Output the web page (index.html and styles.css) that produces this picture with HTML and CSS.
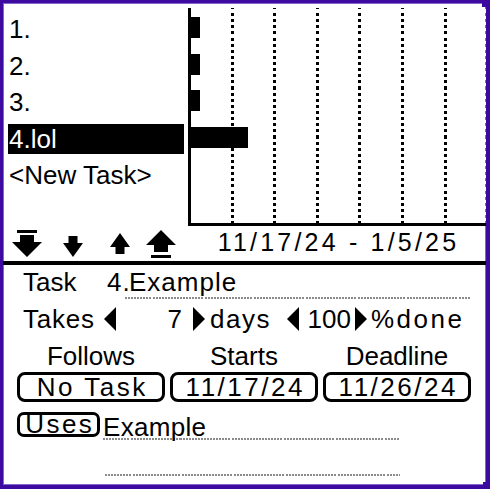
FILE: index.html
```html
<!DOCTYPE html>
<html>
<head>
<meta charset="utf-8">
<title>Project</title>
<link rel="stylesheet" href="styles.css">
</head>
<body>
<div class="screen">
  <div class="top">
    <div class="left">
      <ol class="tasks">
        <li>1.</li>
        <li>2.</li>
        <li>3.</li>
        <li class="sel">4.lol</li>
        <li>&lt;New Task&gt;</li>
      </ol>
      <div class="nav">
        <svg class="ic ic-first" width="30" height="28" viewBox="0 0 30 28"><rect x="5" y="0" width="20" height="3"/><polygon points="8,5 22,5 22,12 30,12 15,27 0,12 8,12"/></svg>
        <svg class="ic ic-down" width="20" height="28" viewBox="0 0 20 28"><polygon points="5.5,6 14.5,6 14.5,13 20,13 10,27 0,13 5.5,13"/></svg>
        <svg class="ic ic-up" width="20" height="28" viewBox="0 0 20 28"><polygon points="10,3 20,17 14.5,17 14.5,24 5.5,24 5.5,17 0,17"/></svg>
        <svg class="ic ic-last" width="30" height="28" viewBox="0 0 30 28"><polygon points="15,0 30,15 22,15 22,22 8,22 8,15 0,15"/><rect x="5" y="25" width="20" height="3"/></svg>
      </div>
    </div>
    <div class="right">
      <div class="chart">
        <div class="bar" style="width:9px"></div>
        <div class="bar" style="width:9px"></div>
        <div class="bar" style="width:9px"></div>
        <div class="bar" style="width:57px"></div>
      </div>
      <div class="range">11/17/24 - 1/5/25</div>
    </div>
  </div>
  <div class="divider"></div>
  <div class="bottom">
    <div class="row task-row">
      <span class="lbl task-lbl">Task</span>
      <span class="num">4.</span>
      <span class="field task-field">Example</span>
    </div>
    <div class="row takes-row">
      <span class="lbl takes-lbl">Takes</span>
      <svg class="tri" width="12" height="24" viewBox="0 0 12 24"><polygon points="12,0 12,24 0,12"/></svg>
      <span class="val days-val">7</span>
      <svg class="tri tri-r" width="12" height="24" viewBox="0 0 12 24"><polygon points="0,0 12,12 0,24"/></svg>
      <span class="unit days-unit">days</span>
      <svg class="tri" width="12" height="24" viewBox="0 0 12 24"><polygon points="12,0 12,24 0,12"/></svg>
      <span class="val pct-val">100</span>
      <svg class="tri tri-r2" width="12" height="24" viewBox="0 0 12 24"><polygon points="0,0 12,12 0,24"/></svg>
      <span class="unit pct-unit">%done</span>
    </div>
    <div class="cols">
      <div class="col"><div class="col-lbl">Follows</div><div class="btn">No Task</div></div>
      <div class="col"><div class="col-lbl">Starts</div><div class="btn">11/17/24</div></div>
      <div class="col"><div class="col-lbl">Deadline</div><div class="btn">11/26/24</div></div>
    </div>
    <div class="row uses-row">
      <div class="btn btn-small">Uses</div>
      <span class="field uses-field">Example</span>
    </div>
    <div class="row extra-row">
      <span class="field empty-field"></span>
    </div>
  </div>
</div>
</body>
</html>
```
FILE: styles.css
```css
html, body {
  margin: 0;
  padding: 0;
  background: #fff;
}

.screen {
  position: relative;
  width: 490px;
  height: 489px;
  box-sizing: border-box;
  border-style: solid;
  border-color: #3c0a9e;
  border-width: 3px 4px 4px 3px;
  box-shadow: inset 1px 1px 0 #8466d0, inset -1px -1px 0 #8466d0;
  background: #fff;
  display: flex;
  flex-direction: column;
  color: #000;
  font-family: "Liberation Sans", Arial, sans-serif;
}

/* frame corner decorations */
.screen::before {
  content: "";
  position: absolute;
  top: -3px;
  right: -4px;
  width: 8px;
  height: 7px;
  background: #3c0a9e;
}
.screen::after {
  content: "";
  position: absolute;
  bottom: 0;
  right: 0;
  width: 3px;
  height: 3px;
  background: #3c0a9e;
}

/* ---------- top half ---------- */
.top {
  height: 258px;
  display: flex;
  flex: 0 0 auto;
}

.left {
  width: 185px;
  display: flex;
  flex-direction: column;
}

.tasks {
  list-style: none;
  margin: 0;
  padding: 11px 0 0 5px;
  flex: 1;
  display: flex;
  flex-direction: column;
  gap: 6.6px;
  font-size: 26px;
  line-height: 30px;
}

.tasks li {
  height: 30px;
  width: 176px;
  padding-left: 1px;
  box-sizing: border-box;
  white-space: nowrap;
}

.tasks li.sel {
  background: #000;
  color: #fff;
}

.nav {
  height: 28px;
  margin-bottom: 3px;
  display: flex;
  align-items: flex-start;
  padding-left: 9px;
}

.ic { display: block; fill: #000; }
.ic-down { margin-left: 21px; }
.ic-up { margin-left: 27px; }
.ic-last { margin-left: 16px; }

.right {
  width: 298px;
  display: flex;
  flex-direction: column;
}

.chart {
  margin-top: 5px;
  height: 218px;
  box-sizing: border-box;
  border-left: 3px solid #000;
  border-bottom: 3px solid #000;
  padding-top: 9px;
  display: flex;
  flex-direction: column;
  gap: 15.6px;
  background-image:
    repeating-linear-gradient(to bottom, #fff 0 3.06px, transparent 3.06px 6.12px),
    repeating-linear-gradient(to right, transparent 0 39.6px, #000 39.6px 42.6px);
  background-position: 0 2px, 0 0;
}

.bar {
  height: 21px;
  background: #000;
  flex: 0 0 auto;
}

.range {
  margin-top: 2px;
  font-size: 25px;
  line-height: 28px;
  letter-spacing: 3.2px;
  padding-left: 3px;
  text-align: center;
  white-space: nowrap;
}

.divider {
  height: 4px;
  background: #000;
  flex: 0 0 auto;
}

/* ---------- bottom half ---------- */
.bottom {
  flex: 1;
  padding: 4px 0 0 14px;
  font-size: 26px;
  line-height: 26px;
  white-space: nowrap;
}

.row {
  display: flex;
}

.field {
  display: block;
  box-sizing: border-box;
  background-image: repeating-linear-gradient(to right, #8a8a8a 0 2px, transparent 2px 3.06px);
  background-size: 100% 2px;
  background-position: left bottom;
  background-repeat: no-repeat;
}

.task-row {
  height: 30px;
  align-items: flex-start;
}
.task-lbl { margin-left: 6px; width: 84px; }
.num { width: 24px; letter-spacing: 1px; }
.task-field {
  width: 346px;
  height: 30px;
  padding-left: 4px;
  margin-left: -6px;
  letter-spacing: 1px;
}

.takes-row {
  height: 30px;
  margin-top: 5px;
  align-items: center;
}
.tri { display: block; fill: #000; flex: 0 0 auto; }
.takes-lbl { margin-left: 6px; width: 81px; letter-spacing: 0.8px; }
.val { text-align: right; box-sizing: border-box; }
.days-val { width: 66px; }
.tri-r { margin-left: 11px; }
.days-unit { margin-left: 5px; width: 77px; letter-spacing: 1.5px; }
.pct-val { width: 55px; padding-right: 3px; }
.tri-r2 { margin-left: 1px; }
.pct-unit { margin-left: 4px; letter-spacing: 2.5px; }

.cols {
  margin-top: 9px;
  display: grid;
  grid-template-columns: 148px 148px 148px;
  column-gap: 5px;
}
.col-lbl {
  text-align: center;
  height: 24px;
}
.btn {
  box-sizing: border-box;
  border: 3px solid #000;
  border-radius: 8px;
  text-align: center;
  background: #fff;
  letter-spacing: 2.5px;
  padding-left: 2.5px;
}
.col .btn {
  margin-top: 5px;
  height: 30px;
  line-height: 24px;
}

.uses-row {
  margin-top: 10px;
  align-items: flex-start;
}
.btn-small {
  width: 83px;
  height: 25px;
  line-height: 19px;
  border-radius: 7px;
}
.uses-field {
  width: 297px;
  height: 26px;
  margin-top: 2px;
  margin-left: 3px;
  padding-left: 0;
  letter-spacing: 0.3px;
}

.extra-row {
  margin-top: 34px;
}
.empty-field {
  width: 295px;
  height: 2px;
  margin-left: 88px;
}
```
